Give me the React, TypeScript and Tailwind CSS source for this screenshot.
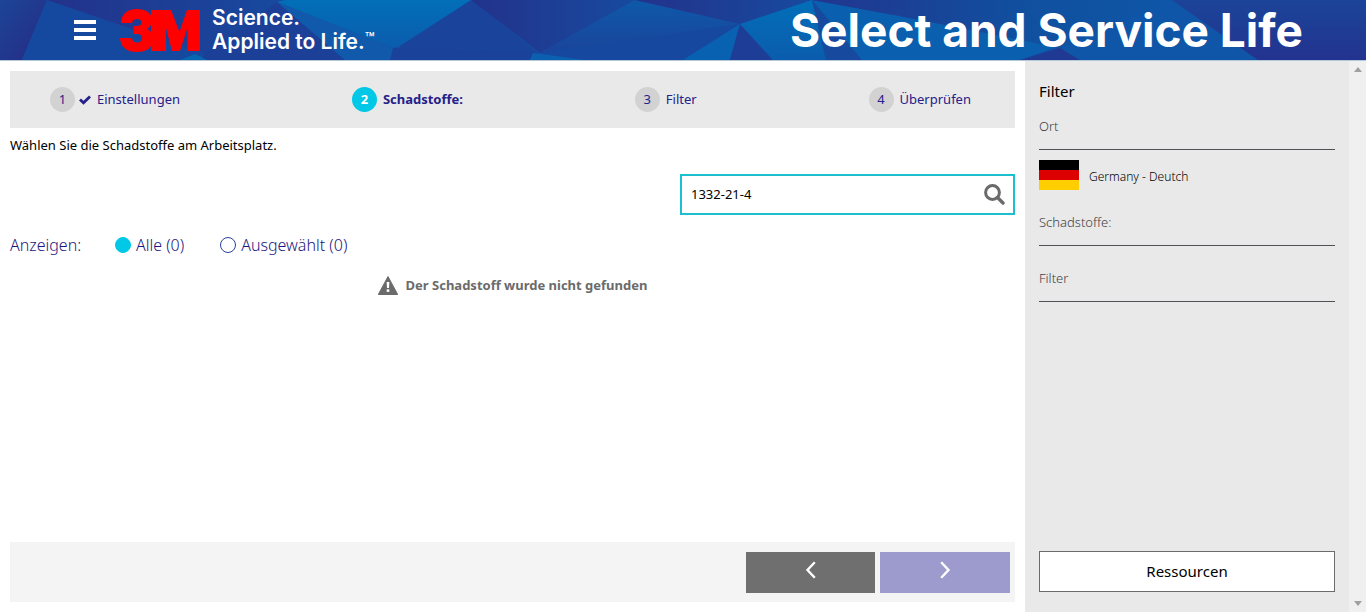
import { useState } from "react";
import type { ReactNode } from "react";

function HeaderBackdrop() {
  return (
    <svg
      className="absolute inset-0 h-full w-full"
      viewBox="0 0 1366 60"
      preserveAspectRatio="none"
      aria-hidden="true"
    >
      <defs>
        <linearGradient id="deep" x1="0" y1="0" x2="1" y2="1">
          <stop offset="0" stopColor="#1c4597" />
          <stop offset="1" stopColor="#262a84" />
        </linearGradient>
        <linearGradient id="indigo" x1="0" y1="0" x2="1" y2="0">
          <stop offset="0" stopColor="#23328b" />
          <stop offset="1" stopColor="#174a9f" />
        </linearGradient>
        <linearGradient id="mid" x1="0" y1="0" x2="0" y2="1">
          <stop offset="0" stopColor="#0e59a9" />
          <stop offset="1" stopColor="#1a449b" />
        </linearGradient>
        <linearGradient id="bright" x1="0" y1="0" x2="0" y2="1">
          <stop offset="0" stopColor="#026fb8" />
          <stop offset="1" stopColor="#0b5cad" />
        </linearGradient>
        <linearGradient id="right" x1="0" y1="0" x2="0" y2="1">
          <stop offset="0" stopColor="#1b4499" />
          <stop offset="1" stopColor="#23338f" />
        </linearGradient>
        <linearGradient id="rise" x1="0" y1="0" x2="1" y2="0">
          <stop offset="0" stopColor="#22358f" />
          <stop offset="0.6" stopColor="#10509f" />
          <stop offset="1" stopColor="#0f56a7" />
        </linearGradient>
      </defs>
      <rect width="1366" height="60" fill="#134ea2" />
      <polygon points="0,0 47,0 22,60 0,60" fill="url(#deep)" />
      <polygon points="47,0 205,54 190,60 22,60" fill="#15499f" />
      <polygon points="47,0 285,0 277,2 205,54" fill="url(#indigo)" />
      <polygon points="205,54 277,2 345,60 200,60" fill="#1c3f98" />
      <polygon points="180,60 195,54 207,60" fill="#0766b2" />
      <polygon points="277,2 285,0 475,0 400,46 393,48" fill="url(#bright)" />
      <polygon points="277,2 393,48 400,60 345,60" fill="#1159aa" />
      <polygon points="471,0 538,53 400,50 400,46" fill="#1a449b" />
      <polygon points="393,48 538,53 540,60 390,60" fill="#1a429a" />
      <polygon points="471,0 635,0 540,53" fill="url(#indigo)" />
      <polygon points="635,0 740,24 540,53" fill="url(#mid)" />
      <polygon points="540,53 740,24 683,60 580,60" fill="#17489f" />
      <polygon points="533,53 585,60 530,60" fill="#0b61b0" />
      <polygon points="740,24 730,60 683,60" fill="#0862b1" />
      <polygon points="740,24 773,60 730,60" fill="#1d3d97" />
      <polygon points="635,0 812,0 740,24" fill="url(#indigo)" />
      <polygon points="740,24 812,0 826,60 773,60" fill="url(#bright)" />
      <polygon points="812,0 1060,46 1020,60 826,60" fill="#0a5fae" />
      <polygon points="812,0 862,60 826,60" fill="#17499f" />
      <polygon points="812,0 1172,0 1060,48 900,16" fill="url(#rise)" />
      <polygon points="1172,0 1258,60 1078,60 1060,48" fill="#0f56a8" />
      <polygon points="1060,48 1080,60 1020,60" fill="#203a93" />
      <polygon points="1172,0 1366,0 1366,60 1258,60" fill="url(#right)" />
    </svg>
  );
}

function Logo() {
  return (
    <svg width="80" height="43" viewBox="0 0 80 43" role="img" aria-label="3M" fill="#ff0000">
      <path d="M1 14C1.500 5 7 0 17 0c8 0 15 3.500 15 11 0 4-1.500 7-5 9 4 1.500 6 5 6 9.500C33 38.500 27 43 17 43 7 43 .5 38.500 0 29h12c.3 3 2 4.500 5 4.500s5-1.700 5-4.500c0-3-2-4-5-4h-3.500v-8H17c3 0 4.500-1.200 4.500-3.500S20 10 17 10s-4.500 1.300-4.800 4z" />
      <path d="M31 1h20l8.500 22L67 1h13v41H67.500V19L60 42h-8l-6-23v23H31z" />
    </svg>
  );
}

function Step({ n, label, active, done }: { n: number; label: string; active?: boolean; done?: boolean }) {
  return (
    <li className={`flex items-center text-[#25208a] ${active ? "font-bold" : ""}`}>
      <span
        className={`flex size-[25px] items-center justify-center rounded-full ${
          active ? "bg-[#00c8e6] text-white" : "bg-[#d2d2d2]"
        }`}
      >
        {n}
      </span>
      {done && (
        <svg className="ml-1 w-3" viewBox="0 0 12 10" aria-hidden="true">
          <path d="M1 4.500l3.500 3.300L11 1.500" fill="none" stroke="currentColor" strokeWidth="2.800" />
        </svg>
      )}
      <span className="ml-1.5">{label}</span>
    </li>
  );
}

function RadioOption({ checked, onChange, children }: { checked: boolean; onChange: () => void; children: ReactNode }) {
  return (
    <label className="flex items-center gap-[5px]">
      <input
        type="radio"
        name="show"
        checked={checked}
        onChange={onChange}
        className="size-4 appearance-none rounded-full border border-[#25409a] checked:border-[#00c8e6] checked:bg-[#00c8e6]"
      />
      {children}
    </label>
  );
}

function Section({ title }: { title: string }) {
  return <h3 className="h-9 border-b border-[#505056] pt-1 text-[13px] leading-4 font-light text-[#404046]">{title}</h3>;
}

export default function App() {
  const [show, setShow] = useState("all");
  const [query, setQuery] = useState("1332-21-4");
  return (
    <div className="flex min-h-screen flex-col bg-white font-['Noto_Sans',sans-serif] text-[13px] text-black">
      <header className="relative border-b border-[#b4c8da] font-[Inter,sans-serif] text-white">
        <HeaderBackdrop />
        <div className="relative flex h-[60px] items-center pr-[63px] pl-[74px]">
          <button type="button" aria-label="Menu" className="mr-6 flex w-[22px] flex-col gap-1">
            <span className="h-1 bg-white" />
            <span className="h-1 bg-white" />
            <span className="h-1 bg-white" />
          </button>
          <Logo />
          <p className="ml-3 text-[21px] leading-6 font-semibold">
            Science.
            <br />
            Applied to Life.<span className="align-top text-base leading-4 font-medium">™</span>
          </p>
          <h1 className="ml-auto text-[46px] leading-[60px] font-bold">Select and Service Life</h1>
        </div>
      </header>

      <div className="flex flex-1">
        <main className="flex flex-1 flex-col p-2.5">
          <ol className="flex h-[57px] items-center justify-between bg-[#e9e9e9] pr-11 pl-10">
            <Step n={1} label="Einstellungen" done />
            <Step n={2} label="Schadstoffe:" active />
            <Step n={3} label="Filter" />
            <Step n={4} label="Überprüfen" />
          </ol>
          <p className="mt-[7px] leading-5">Wählen Sie die Schadstoffe am Arbeitsplatz.</p>
          <div className="mt-[19px] flex h-[41px] w-1/3 items-center self-end border-2 border-[#1cbfd0] pr-2 pl-[9px]">
            <input
              type="text"
              aria-label="Schadstoff suchen"
              value={query}
              onChange={(e) => setQuery(e.target.value)}
              className="min-w-0 flex-1 outline-none"
            />
            <button type="button" aria-label="Suchen">
              <svg width="21" height="21" viewBox="0 0 21 21" fill="none" stroke="#6b6b6b" aria-hidden="true">
                <circle cx="8.500" cy="8.500" r="6.900" strokeWidth="3" />
                <path d="M13.500 13.500l5.500 5.500" strokeWidth="3.400" strokeLinecap="round" />
              </svg>
            </button>
          </div>
          <fieldset className="mt-[18px] flex items-center text-base leading-6 font-light text-[#1c1780]">
            <legend className="float-left w-[105px]">Anzeigen:</legend>
            <div className="flex gap-9">
              <RadioOption checked={show === "all"} onChange={() => setShow("all")}>
                Alle (0)
              </RadioOption>
              <RadioOption checked={show === "selected"} onChange={() => setShow("selected")}>
                Ausgewählt (0)
              </RadioOption>
            </div>
          </fieldset>
          <p className="mt-[18px] flex items-center justify-center gap-2 leading-5 font-bold text-[#6b6b6b]">
            <svg width="20" height="19" viewBox="0 0 20 19" aria-hidden="true">
              <path d="M10 .5L19.700 18.500H.3z" fill="#6b6b6b" stroke="#6b6b6b" strokeLinejoin="round" />
              <path d="M8.600 6h2.800l-.4 6H9z" fill="#fff" />
              <rect x="8.700" y="13.300" width="2.600" height="2.600" fill="#fff" />
            </svg>
            Der Schadstoff wurde nicht gefunden
          </p>
          <div className="mt-auto flex h-[60px] items-center justify-end gap-[5px] bg-[#f4f4f4] pr-[5px]">
            <button type="button" aria-label="Zurück" className="flex h-[41px] w-[129px] items-center justify-center bg-[#6f6f6f]">
              <svg className="mb-1" width="12" height="18" viewBox="0 0 12 18" fill="none" stroke="#fff" strokeWidth="2.400" aria-hidden="true">
                <path d="M9.800 1.200L2.500 9l7.300 7.800" />
              </svg>
            </button>
            <button type="button" aria-label="Weiter" className="flex h-[41px] w-[130px] items-center justify-center bg-[#9d9bce]">
              <svg className="mb-1" width="12" height="18" viewBox="0 0 12 18" fill="none" stroke="#fff" strokeWidth="2.400" aria-hidden="true">
                <path d="M2.200 1.200L9.500 9l-7.300 7.800" />
              </svg>
            </button>
          </div>
        </main>

        <aside className="flex w-[324px] flex-col bg-[#e9e9e9] px-3.5 py-5">
          <h2 className="mb-3 text-[15px] leading-[21px]">Filter</h2>
          <Section title="Ort" />
          <div className="mt-2.5 mb-5 flex items-center gap-2.5 text-xs font-light text-black">
            <svg width="40" height="30" viewBox="0 0 40 30" role="img" aria-label="Germany">
              <rect width="40" height="10" fill="#000" />
              <rect y="10" width="40" height="10" fill="#dd0000" />
              <rect y="20" width="40" height="10" fill="#ffce00" />
            </svg>
            <span className="pt-1">Germany - Deutch</span>
          </div>
          <div className="flex flex-col gap-5">
            <Section title="Schadstoffe:" />
            <Section title="Filter" />
          </div>
          <button type="button" className="mt-auto h-[41px] border border-[#6b6b6b] bg-white text-[15px]">
            Ressourcen
          </button>
        </aside>

        <div className="flex w-[17px] flex-col items-center justify-between bg-[#f0f0f0] py-1.5" aria-hidden="true">
          <svg width="8" height="5" viewBox="0 0 8 5">
            <path d="M4 0l4 5H0z" fill="#a0a0a0" />
          </svg>
          <svg width="8" height="5" viewBox="0 0 8 5">
            <path d="M0 0h8L4 5z" fill="#a0a0a0" />
          </svg>
        </div>
      </div>
    </div>
  );
}
